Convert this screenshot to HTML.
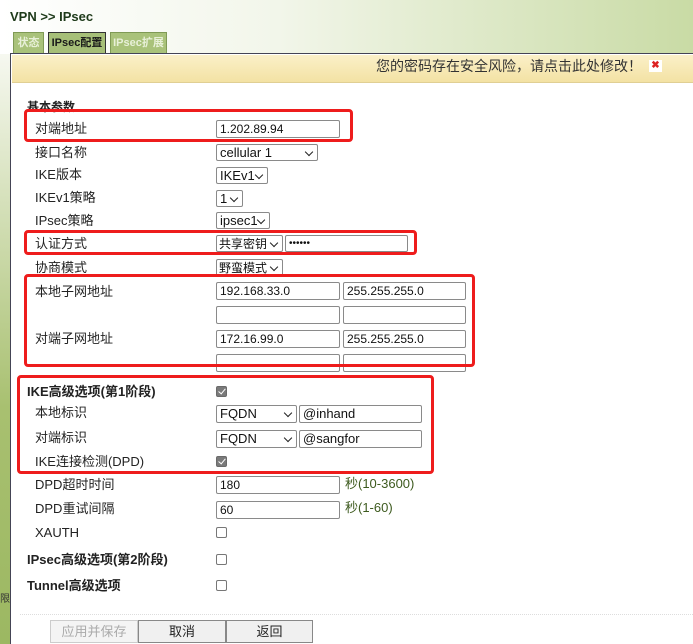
<!DOCTYPE html><html><head><meta charset="utf-8"><style>
*{box-sizing:border-box}
body{margin:0;width:693px;height:644px;overflow:hidden;position:relative;font-family:"Liberation Sans","Noto Sans CJK SC",sans-serif;font-size:13px;line-height:16px;color:#222;background:#fff}
.a{position:absolute;white-space:nowrap}
.top{position:absolute;left:0;top:0;width:693px;height:54px;background:linear-gradient(90deg,#fff 0%,#f2f6ea 40%,#c9dba5 100%)}
.left{position:absolute;left:0;top:54px;width:11px;height:590px;background:linear-gradient(180deg,#f6f8f0,#a8c070 60%,#9cb862)}
.tab{position:absolute;top:32px;height:21px;background:#a9c27a;border:1px solid #7f9a55;border-bottom:none;font-size:11px;font-weight:bold;color:#e8f0d8;text-align:center;line-height:20px}
.box{position:absolute;left:10px;top:53px;width:683px;height:591px;background:#fff;border-left:1px solid #445;border-top:1px solid #445}
.ban{position:absolute;left:12px;top:55px;width:681px;height:28px;background:linear-gradient(#fbf0c8,#f3e2a4);border-bottom:1px solid #e0cf94}
.lb{position:absolute;left:35px;white-space:nowrap}
.bl{position:absolute;left:27px;font-weight:bold;white-space:nowrap}
.in{position:absolute;height:18px;border:1px solid #8a8a8a;border-radius:2px;font-size:12px;line-height:16px;padding-left:3px;background:#fff;color:#111;overflow:hidden}
.sel{font-size:13px}
.sel::after{content:"";position:absolute;right:5px;top:4px;width:5px;height:5px;border-right:1.5px solid #222;border-bottom:1.5px solid #222;transform:rotate(45deg)}
.cb{position:absolute;left:216px;width:11px;height:11px;border:1px solid #777;border-radius:2px;background:#fff}
.ck{background:#7a7a7a;border-color:#6a6a6a}
.ck::after{content:"";position:absolute;left:3px;top:0px;width:3px;height:6px;border-right:1.5px solid #fff;border-bottom:1.5px solid #fff;transform:rotate(40deg)}
.red{position:absolute;border:3px solid #ee1c1c;border-radius:4px}
.btn{position:absolute;top:620px;height:23px;border:1px solid #888;background:#f0f0f0;text-align:center;line-height:21px;font-size:13px}
.g{color:#3d5a1e}
</style></head><body>
<div class="top"></div>
<div class="a" style="left:10px;top:9px;font-weight:bold;font-size:13px;color:#1e3a1a">VPN &gt;&gt; IPsec</div>
<div class="tab" style="left:13px;width:31px">状态</div>
<div class="tab" style="left:48px;width:58px;color:#1a1a1a;background:#a6bf78;border-color:#333">IPsec配置</div>
<div class="tab" style="left:110px;width:57px">IPsec扩展</div>
<div class="left"></div>
<div class="box"></div>
<div class="ban"></div>
<div class="a" style="left:376px;top:58px;font-size:14px;color:#333">您的密码存在安全风险，请点击此处修改！</div>
<div class="a" style="left:649px;top:60px;width:13px;height:12px;background:#fff;color:#d22;font-size:10px;font-weight:bold;text-align:center;line-height:12px">✖</div>

<div class="bl" style="top:99px;font-size:12px">基本参数</div>
<div class="lb" style="top:121px">对端地址</div><div class="in" style="left:216px;top:120px;width:124px">1.202.89.94</div>
<div class="lb" style="top:145px">接口名称</div><div class="in sel" style="left:216px;top:144px;width:102px;height:17px">cellular 1</div>
<div class="lb" style="top:167px">IKE版本</div><div class="in sel" style="left:216px;top:167px;width:52px;height:17px">IKEv1</div>
<div class="lb" style="top:190px">IKEv1策略</div><div class="in sel" style="left:216px;top:190px;width:27px;height:17px">1</div>
<div class="lb" style="top:213px">IPsec策略</div><div class="in sel" style="left:216px;top:212px;width:54px;height:17px">ipsec1</div>
<div class="lb" style="top:236px">认证方式</div><div class="in sel" style="left:216px;top:235px;width:67px;height:17px;font-size:12px;padding-left:2px">共享密钥</div><div class="in" style="left:285px;top:235px;width:123px;height:17px;font-size:10px">••••••</div>
<div class="lb" style="top:260px">协商模式</div><div class="in sel" style="left:216px;top:259px;width:67px;height:17px;font-size:12px;padding-left:2px">野蛮模式</div>
<div class="lb" style="top:284px">本地子网地址</div>
<div class="in" style="left:216px;top:282px;width:124px">192.168.33.0</div><div class="in" style="left:343px;top:282px;width:123px">255.255.255.0</div>
<div class="in" style="left:216px;top:306px;width:124px"></div><div class="in" style="left:343px;top:306px;width:123px"></div>
<div class="lb" style="top:331px">对端子网地址</div>
<div class="in" style="left:216px;top:330px;width:124px">172.16.99.0</div><div class="in" style="left:343px;top:330px;width:123px">255.255.255.0</div>
<div class="in" style="left:216px;top:354px;width:124px"></div><div class="in" style="left:343px;top:354px;width:123px"></div>

<div class="bl" style="top:384px">IKE高级选项(第1阶段)</div><div class="cb ck" style="top:386px"></div>
<div class="lb" style="top:405px">本地标识</div><div class="in sel" style="left:216px;top:405px;width:81px">FQDN</div><div class="in" style="left:299px;top:405px;width:123px;font-size:13px">@inhand</div>
<div class="lb" style="top:430px">对端标识</div><div class="in sel" style="left:216px;top:430px;width:81px">FQDN</div><div class="in" style="left:299px;top:430px;width:123px;font-size:13px">@sangfor</div>
<div class="lb" style="top:454px">IKE连接检测(DPD)</div><div class="cb ck" style="top:456px"></div>
<div class="lb" style="top:477px">DPD超时时间</div><div class="in" style="left:216px;top:476px;width:124px">180</div><div class="a g" style="left:345px;top:476px">秒(10-3600)</div>
<div class="lb" style="top:501px">DPD重试间隔</div><div class="in" style="left:216px;top:501px;width:124px">60</div><div class="a g" style="left:345px;top:500px">秒(1-60)</div>
<div class="lb" style="top:525px">XAUTH</div><div class="cb" style="top:527px"></div>
<div class="bl" style="top:552px">IPsec高级选项(第2阶段)</div><div class="cb" style="top:554px"></div>
<div class="bl" style="top:578px">Tunnel高级选项</div><div class="cb" style="top:580px"></div>

<div class="red" style="left:24px;top:109px;width:329px;height:33px"></div>
<div class="red" style="left:24px;top:230px;width:393px;height:25px"></div>
<div class="red" style="left:24px;top:274px;width:451px;height:93px"></div>
<div class="red" style="left:17px;top:375px;width:417px;height:99px"></div>

<div class="a" style="left:20px;top:614px;width:673px;border-top:1px dotted #ddd"></div>
<div class="btn" style="left:50px;width:88px;color:#aaa;border-color:#ccc;background:#f4f4f4">应用并保存</div>
<div class="btn" style="left:138px;width:88px">取消</div>
<div class="btn" style="left:226px;width:87px">返回</div>
<div class="a" style="left:0;top:592px;font-size:10px;color:#333">限</div>
</body></html>
